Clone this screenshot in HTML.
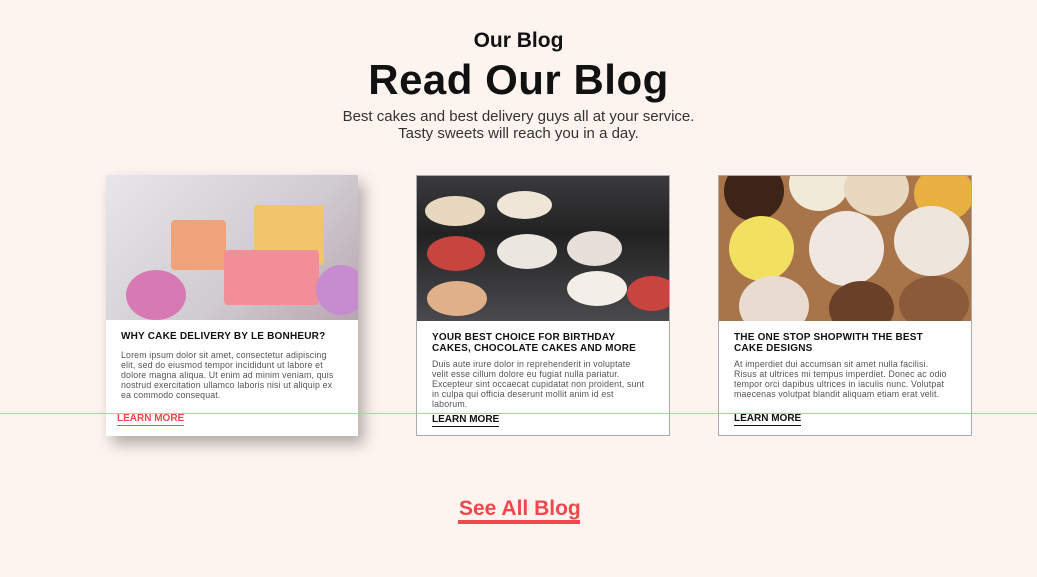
<!DOCTYPE html>
<html><head><meta charset="utf-8"><style>
*{margin:0;padding:0;box-sizing:border-box}
body{width:1037px;height:577px;background:#fdf4ef;font-family:"Liberation Sans",sans-serif;position:relative;overflow:hidden;color:#111}
.h1{position:absolute;top:29px;width:100%;text-align:center;font-size:21px;font-weight:bold}
.h2{position:absolute;top:56px;width:100%;text-align:center;font-size:42px;font-weight:bold;letter-spacing:0.5px}
.sub{position:absolute;top:108px;width:100%;text-align:center;font-size:15px;line-height:17px;color:#333}
.card{position:absolute;top:175px;height:261px;background:#fff;border:1px solid #aaa}
.card.s{border:none;box-shadow:6px 8px 14px rgba(0,0,0,.3)}
.img{height:145px;position:relative;overflow:hidden}
.t{position:absolute;left:15px;top:156px;font-size:10px;font-weight:bold;line-height:11px;letter-spacing:.2px}
.p{position:absolute;left:15px;font-size:8.8px;line-height:10px;letter-spacing:.15px;color:#555;white-space:nowrap}
.lm{position:absolute;left:15px;font-size:10px;font-weight:bold;border-bottom:1.5px solid #111;padding-bottom:1px}
.line{position:absolute;left:0;top:413px;width:100%;height:1px;background:#f0b09a}
.see{position:absolute;left:459px;top:497px;font-size:21px;font-weight:bold;color:#f2474c}
.bar{position:absolute;left:458px;top:520px;width:122px;height:4px;background:#f2474c}
.c{position:absolute;border-radius:50%}
</style></head><body>
<div class="h1">Our Blog</div>
<div class="h2">Read Our Blog</div>
<div class="sub">Best cakes and best delivery guys all at your service.<br>Tasty sweets will reach you in a day.</div>

<div class="card s" style="left:106px;width:252px">
 <div class="img" style="background:linear-gradient(135deg,#e8e6e8,#cfcbd0 60%,#b9a5b0)">
  <div style="position:absolute;left:65px;top:45px;width:55px;height:50px;background:#f0a27a;border-radius:4px"></div>
  <div style="position:absolute;left:148px;top:30px;width:70px;height:60px;background:#f2c56a;border-radius:4px"></div>
  <div style="position:absolute;left:118px;top:75px;width:95px;height:55px;background:#f28e98;border-radius:4px"></div>
  <div class="c" style="left:20px;top:95px;width:60px;height:50px;background:#d77ab3"></div>
  <div class="c" style="left:210px;top:90px;width:50px;height:50px;background:#c78bd0"></div>
 </div>
 <div class="t">WHY CAKE DELIVERY BY LE BONHEUR?</div>
 <div class="p" style="top:175px">Lorem ipsum dolor sit amet, consectetur adipiscing<br>elit, sed do eiusmod tempor incididunt ut labore et<br>dolore magna aliqua. Ut enim ad minim veniam, quis<br>nostrud exercitation ullamco laboris nisi ut aliquip ex<br>ea commodo consequat.</div>
 <div class="lm" style="top:238px;color:#f2474c;border-color:#f2474c;left:11px">LEARN MORE</div>
</div>

<div class="card" style="left:416px;width:254px">
 <div class="img" style="background:linear-gradient(180deg,#3a3a3e,#222 40%,#4a4a4e)">
  <div class="c" style="left:8px;top:20px;width:60px;height:30px;background:#e8d8c0"></div>
  <div class="c" style="left:80px;top:15px;width:55px;height:28px;background:#f0e6d8"></div>
  <div class="c" style="left:10px;top:60px;width:58px;height:35px;background:#c8443f"></div>
  <div class="c" style="left:80px;top:58px;width:60px;height:35px;background:#ece6e0"></div>
  <div class="c" style="left:150px;top:55px;width:55px;height:35px;background:#e8e0d8"></div>
  <div class="c" style="left:10px;top:105px;width:60px;height:35px;background:#e0b08a"></div>
  <div class="c" style="left:150px;top:95px;width:60px;height:35px;background:#f3efe8"></div>
  <div class="c" style="left:210px;top:100px;width:50px;height:35px;background:#c8443f"></div>
 </div>
 <div class="t">YOUR BEST CHOICE FOR BIRTHDAY<br>CAKES, CHOCOLATE CAKES AND MORE</div>
 <div class="p" style="top:183px">Duis aute irure dolor in reprehenderit in voluptate<br>velit esse cillum dolore eu fugiat nulla pariatur.<br>Excepteur sint occaecat cupidatat non proident, sunt<br>in culpa qui officia deserunt mollit anim id est<br>laborum.</div>
 <div class="lm" style="top:238px">LEARN MORE</div>
</div>

<div class="card" style="left:718px;width:254px">
 <div class="img" style="background:#a8744a">
  <div class="c" style="left:5px;top:-15px;width:60px;height:60px;background:#3c2418"></div>
  <div class="c" style="left:70px;top:-20px;width:60px;height:55px;background:#f2ead8"></div>
  <div class="c" style="left:125px;top:-15px;width:65px;height:55px;background:#e8d8c0"></div>
  <div class="c" style="left:195px;top:-10px;width:60px;height:55px;background:#e8b040"></div>
  <div class="c" style="left:10px;top:40px;width:65px;height:65px;background:#f2e060"></div>
  <div class="c" style="left:90px;top:35px;width:75px;height:75px;background:#f0e8e0"></div>
  <div class="c" style="left:175px;top:30px;width:75px;height:70px;background:#eee6dc"></div>
  <div class="c" style="left:20px;top:100px;width:70px;height:60px;background:#e8dcd0"></div>
  <div class="c" style="left:110px;top:105px;width:65px;height:55px;background:#6a4028"></div>
  <div class="c" style="left:180px;top:100px;width:70px;height:55px;background:#8a5a3a"></div>
 </div>
 <div class="t">THE ONE STOP SHOPWITH THE BEST<br>CAKE DESIGNS</div>
 <div class="p" style="top:183px">At imperdiet dui accumsan sit amet nulla facilisi.<br>Risus at ultrices mi tempus imperdiet. Donec ac odio<br>tempor orci dapibus ultrices in iaculis nunc. Volutpat<br>maecenas volutpat blandit aliquam etiam erat velit.</div>
 <div class="lm" style="top:237px">LEARN MORE</div>
</div>

<div class="line"></div>
<div class="see">See All Blog</div>
<div class="bar"></div>
</body></html>
